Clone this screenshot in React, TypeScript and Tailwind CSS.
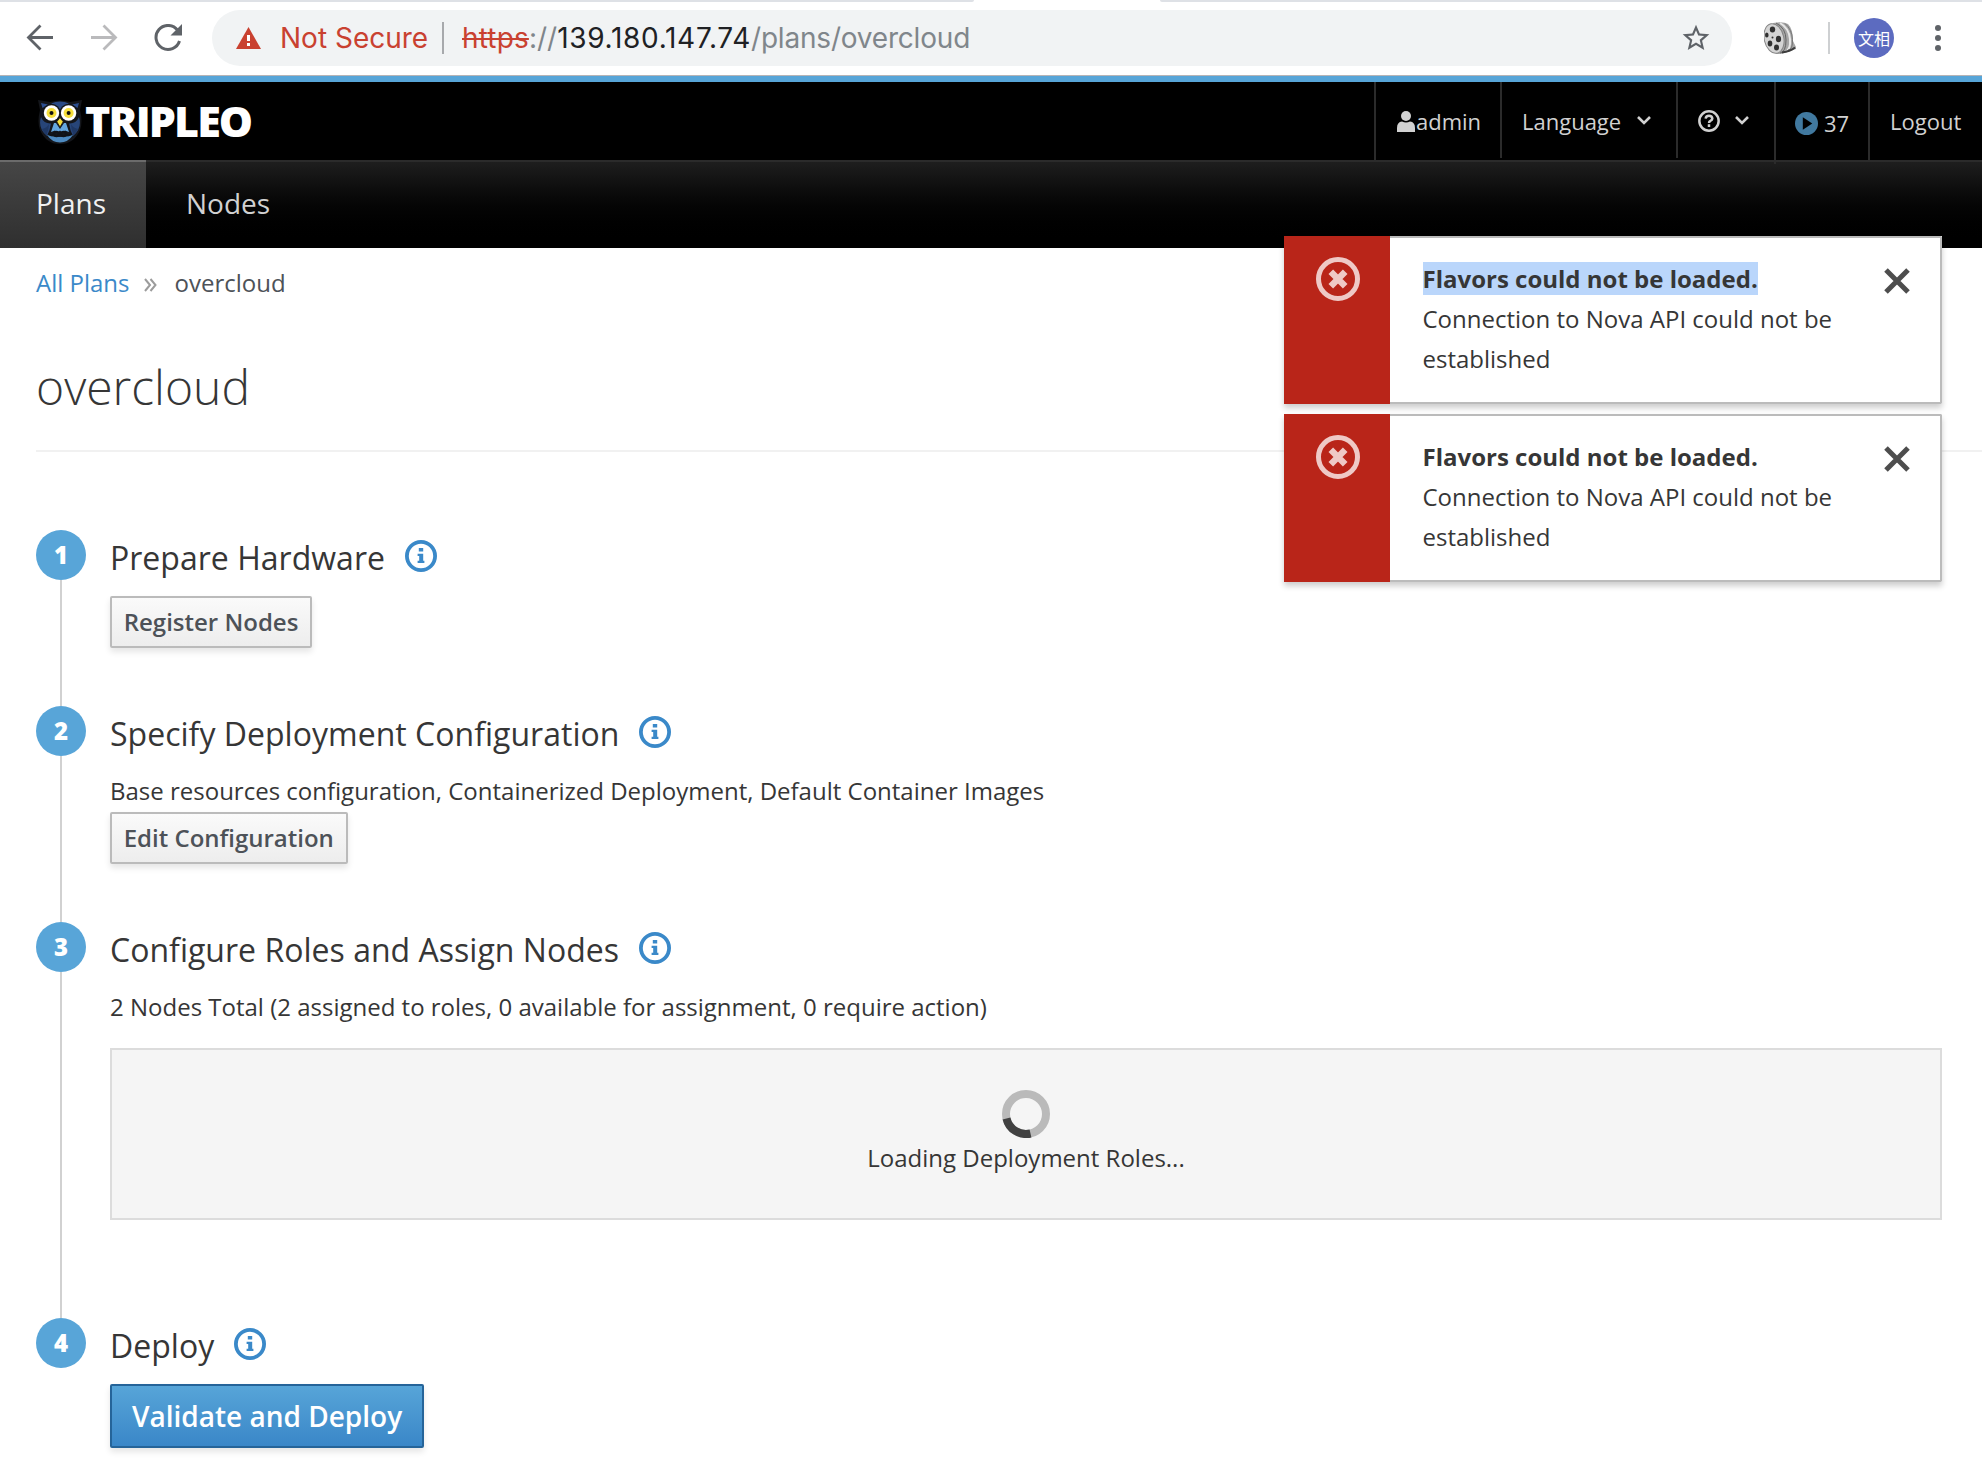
import React from "react";

const SANS = "font-['Open_Sans','Noto_Sans',sans-serif]";

function InfoIcon() {
  return (
    <svg className="size-8" viewBox="0 0 32 32" fill="none">
      <circle cx="16" cy="16" r="14.1" stroke="#3a89c9" strokeWidth="3.8" />
      <path d="M13.800 8h4.400v3.600h-4.400zM12.600 13.800h5.600v7h1.200V23h-6.800v-2.200h1.600v-4.800h-1.600z" fill="#3a89c9" />
    </svg>
  );
}

function Owl() {
  return (
    <svg className="mt-[2px] h-[46px] w-[44px]" viewBox="0 0 44 46">
      <path d="M0 1l12 2q10-3 20 0l12-2-2 10q3 12 0 20-6 14-20 14T2 31q-3-8 0-20z" fill="#14161b" />
      <path d="M3 4l7 1.500L4.500 9zM41 4l-7 1.500L39.500 9z" fill="#2d4f90" />
      <path d="M13 4.500q9-4 18 0-6 2-9 6.500-3-4.500-9-6.500z" fill="#2a4a86" />
      <path d="M3 18q3 7 10 6.500-1 7-4 12.500Q-.5 29 3 18zM41 18q-3 7-10 6.500 1 7 4 12.500 9.500-8 6-19z" fill="#274579" />
      <path d="M4 30q5-1 7-5 0 5-2.500 11Q5 33 4 30zM40 30q-5-1-7-5 0 5 2.500 11Q39 33 40 30z" fill="#1f3864" />
      <path d="M16 24h2l4 6 4-6h2l3 9-4-1.500-2.500 2L22 31.500l-2.500 2-2.500-2L13 33z" fill="#63a6df" />
      <path d="M9 36q6 2 13 2t13-2q-5 7.500-13 7.500T9 36z" fill="#4d8ac0" />
      <g fill="none" stroke="#101216" strokeWidth="2">
        <circle cx="18.500" cy="35" r="2.300" />
        <circle cx="25.500" cy="35" r="2.300" />
        <path d="M11 34q2 4 5 1M33 34q-2 4-5 1" />
      </g>
      <circle cx="13.500" cy="14" r="9.200" fill="#14161b" />
      <circle cx="30.600" cy="14" r="9.200" fill="#14161b" />
      <circle cx="13.500" cy="14" r="7.700" fill="#fff" />
      <circle cx="30.600" cy="14" r="7.700" fill="#fff" />
      <circle cx="13.500" cy="14" r="5" fill="#f6df3c" />
      <circle cx="30.600" cy="14" r="5" fill="#f6df3c" />
      <circle cx="13.500" cy="14" r="2" fill="#111" />
      <circle cx="30.600" cy="14" r="2" fill="#111" />
      <path d="M22 18.500l3.200 4.200L22 28l-3.200-5.300z" fill="#f6df3c" stroke="#14161b" strokeWidth=".8" />
    </svg>
  );
}

function FilmReel() {
  return (
    <svg className="size-8" viewBox="0 0 32 32">
      <path d="M9 1q10-2 15 1 5 5 5 17l3 6v2l-15 5h-5z" fill="#a6a6a6" />
      <path d="M16 1q9 5 10 16t-5 13" fill="none" stroke="#e8e8e8" strokeWidth="2" />
      <path d="M21 1.500q7 6 7.500 16T24 28" fill="none" stroke="#777" strokeWidth="1" />
      <path d="M12 1q10 5 10 17t-6 13" fill="none" stroke="#666" strokeWidth="1" />
      <ellipse cx="10" cy="16.500" rx="9.800" ry="15" transform="rotate(-12 10 16.500)" fill="#d4d4d4" stroke="#858585" />
      <g fill="#303030">
        <ellipse cx="8.500" cy="7.500" rx="2.700" ry="3" />
        <ellipse cx="2.800" cy="13" rx="1.800" ry="2.600" />
        <ellipse cx="14.500" cy="17" rx="2.600" ry="3.200" />
        <ellipse cx="6" cy="21.500" rx="2.300" ry="2.900" />
        <ellipse cx="12.500" cy="25.500" rx="2.500" ry="3" />
        <circle cx="8.500" cy="15.500" r="1" />
      </g>
      <path d="M18 30.500q8-1 13-5" fill="none" stroke="#3c3c3c" strokeWidth="2" />
    </svg>
  );
}

function Browser() {
  return (
    <div className="h-[76px] border-b border-[#b6b4b6] bg-white">
      <div className="flex h-[2px] justify-between">
        <div className="w-[974px] rounded-br bg-[#dee1e6]" />
        <div className="w-[822px] rounded-bl bg-[#dee1e6]" />
      </div>
      <div className="flex h-[72px] items-center font-[Inter,sans-serif] text-[28px]">
        <svg className="ml-[26px] h-7 w-7" viewBox="0 0 28 28" fill="none" stroke="#5f6368" strokeWidth="2.800">
          <path d="M27 13.500H3M14.500 1.500L2.500 13.500l12 12" />
        </svg>
        <svg className="ml-[36px] h-7 w-7" viewBox="0 0 28 28" fill="none" stroke="#bababc" strokeWidth="2.800">
          <path d="M1 13.500h24M13.500 1.500l12 12-12 12" />
        </svg>
        <svg className="ml-[36px] h-7 w-7" viewBox="0 0 28 28">
          <path d="M23.600 6.200A12 12 0 1 0 25.500 17" fill="none" stroke="#5f6368" strokeWidth="3" />
          <path d="M28 0v11.500H16.500z" fill="#5f6368" />
        </svg>
        <div className="ml-[30px] flex h-14 w-[1520px] items-center rounded-full bg-[#f1f3f4]">
          <svg className="ml-6 h-[22px] w-[25px]" viewBox="0 0 25 22">
            <path d="M12.500 0L25 22H0z" fill="#c94130" />
            <path d="M11 8h3v6h-3zM11 16h3v3h-3z" fill="#fff" />
          </svg>
          <span className="ml-[19px] w-[146px] whitespace-nowrap text-[#c94130]">Not Secure</span>
          <div className="ml-[16px] h-8 w-[2px] bg-[#a7a9ac]" />
          <div className="ml-[18px] whitespace-nowrap text-[#80868b]">
            <span className="tracking-[0.15px] text-[#c94130] line-through decoration-2">https</span>://
            <span className="tracking-[0.7px] text-[#202124]">139.180.147.74</span>
            <span className="tracking-[-0.200px]">/plans/overcloud</span>
          </div>
          <svg className="mr-[20px] ml-auto h-8 w-8" viewBox="0 0 24 24" fill="#5f6368">
            <path d="M22 9.240l-7.190-.62L12 2 9.190 8.630 2 9.240l5.460 4.730L5.820 21 12 17.270 18.180 21l-1.630-7.030L22 9.240zM12 15.400l-3.760 2.270 1-4.280-3.320-2.880 4.380-.38L12 6.100l1.710 4.040 4.380.38-3.320 2.880 1 4.280L12 15.400z" />
          </svg>
        </div>
        <div className="ml-8"><FilmReel /></div>
        <div className="ml-8 h-8 w-[2px] bg-[#ced0d2]" />
        <div className="ml-6 flex size-10 items-center justify-center rounded-full bg-[#5c6bc0] font-['Noto_Sans_CJK_SC',sans-serif] text-[16px] text-white">文相</div>
        <div className="ml-[41px] flex flex-col gap-1">
          <i className="size-[6px] rounded-full bg-[#5f6368]" />
          <i className="size-[6px] rounded-full bg-[#5f6368]" />
          <i className="size-[6px] rounded-full bg-[#5f6368]" />
        </div>
      </div>
    </div>
  );
}

function Chevron() {
  return (
    <svg className="h-[9px] w-[14px]" viewBox="0 0 14 9" fill="none" stroke="#d1d1d1" strokeWidth="2.600">
      <path d="M1 1l6 6 6-6" />
    </svg>
  );
}

function Header() {
  return (
    <header className="border-t-[6px] border-[#57a5d8] bg-black text-[#d1d1d1]">
      <div className="flex h-[78px] justify-between">
        <div className="flex items-center pl-[38px]">
          <Owl />
          <span className="ml-[3px] font-['Open_Sans',sans-serif] text-[43px] font-extrabold tracking-[-1.900px] text-white">TRIPLEO</span>
        </div>
        <div className="flex items-start text-[22px]">
          <div className="flex h-[78px] w-[126px] items-center border-l-2 border-[#2b2b2b] pt-px pl-[21px]">
            <svg className="mr-[1px] h-[21px] w-[18px]" viewBox="0 0 18 21" fill="#d1d1d1">
              <circle cx="9" cy="5" r="5" />
              <path d="M0 21v-4q0-6 5-6.500 4 2 8 0 5 .5 5 6.500v4z" />
            </svg>
            admin
          </div>
          <div className="flex h-[76px] w-[176px] items-center border-l-2 border-[#2b2b2b] pl-5">
            <span className="w-[115px] pt-[3px]">Language</span><Chevron />
          </div>
          <div className="flex h-[76px] w-[98px] items-center border-l-2 border-[#2b2b2b] pl-5">
            <svg className="mt-px mr-[15px] size-[22px]" viewBox="0 0 23 23" fill="none" stroke="#d1d1d1" strokeWidth="2.600">
              <circle cx="11.500" cy="11.500" r="10.100" />
              <path d="M8 9q.3-3 3.500-3T15 9q0 1.500-2 2.300-1.500.7-1.500 2.200M11.500 15v2.700" />
            </svg>
            <Chevron />
          </div>
          <div className="flex h-[82px] w-[94px] items-center border-l-2 border-[#2b2b2b] pl-[19px]">
            <svg className="mr-[6px] size-[23px]" viewBox="0 0 22 22">
              <circle cx="11" cy="11" r="11" fill="#41799f" />
              <path d="M7.500 5l9 6-9 6z" fill="#000" />
            </svg>
            <span className="pt-px">37</span>
          </div>
          <div className="flex h-[78px] w-[114px] items-center border-l-2 border-[#2b2b2b] pt-px pl-5">Logout</div>
        </div>
      </div>
      <nav className="flex h-[88px] border-t-2 border-[#2b2b2b] bg-linear-to-b from-[#1e1e1e] to-black text-[28px] leading-[83px]">
        <div className="-mt-[2px] w-[146px] border-t-2 border-[#6b6b6b] bg-linear-to-b from-[#464646] to-[#2f2f2f] pl-9 text-[#f1f1f1]">Plans</div>
        <div className="pl-10">Nodes</div>
      </nav>
    </header>
  );
}

function Toast({ selected }: { selected?: boolean }) {
  return (
    <div className="flex h-[168px] w-[658px] bg-white shadow-[0_4px_6px_rgba(0,0,0,0.2)]">
      <div className="flex w-[106px] justify-center bg-[#b92519] pt-[21px] pl-px">
        <svg className="size-11" viewBox="0 0 44 44" fill="none" stroke="#efc9c6">
          <circle cx="22" cy="22" r="19.500" strokeWidth="5" />
          <path d="M14.800 14.800l14.400 14.400M29.200 14.800L14.800 29.200" strokeWidth="6.500" />
        </svg>
      </div>
      <div className="flex flex-1 justify-between rounded-r-[2px] border-2 border-l-0 border-[#bbb] pt-[21px] pr-[30px] pl-[32.500px]">
        <div className="w-[420px] text-[24px] leading-[40px]">
          <b className={selected ? "bg-[#bad6fb]" : ""}>Flavors could not be loaded.</b>
          <br />
          Connection to Nova API could not be established
        </div>
        <svg className="mt-[9px] size-[26px]" viewBox="0 0 26 26" stroke="#4d4d4d" strokeWidth="5">
          <path d="M2 2l22 22M24 2L2 24" />
        </svg>
      </div>
    </div>
  );
}

function Step({ n, title, className, last, children }: { n: number; title: string; className: string; last?: boolean; children: React.ReactNode }) {
  return (
    <section className={"flex " + className}>
      <div className="flex w-[50px] flex-col items-center">
        <div className="flex size-[50px] shrink-0 items-center justify-center rounded-full bg-[#58a5d8] text-[24px] font-extrabold text-white">{n}</div>
        {!last && <div className="w-[2px] flex-1 bg-[#d1d1d1]" />}
      </div>
      <div className="ml-6 flex-1">
        <div className="flex h-[66px] pt-[10px]">
          <h2 className="mr-5 text-[32px] leading-9 tracking-[0.02px]">{title}</h2>
          <InfoIcon />
        </div>
        {children}
      </div>
    </section>
  );
}

function Button({ children }: { children: React.ReactNode }) {
  return (
    <button className="block h-[52px] rounded-[2px] border-2 border-[#bbb] bg-linear-to-b from-[#fafafa] to-[#ededed] px-[11.700px] text-[24px] leading-[46px] font-semibold text-[#4d5258] shadow-[0_4px_6px_rgba(3,3,3,0.1)]">
      {children}
    </button>
  );
}

export default function App() {
  return (
    <div className={"relative h-[1472px] w-[1982px] overflow-hidden bg-white text-[24px] text-[#363636] " + SANS}>
      <Browser />
      <Header />
      <main className="pl-9">
        <div className="flex h-14 items-center pt-[14px] leading-10">
          <span className="text-[#3a89c9]">All Plans</span>
          <svg className="mx-[14px] mt-1 h-[14px] w-[13px]" viewBox="0 0 13 14" fill="none" stroke="#9c9c9c" strokeWidth="2">
            <path d="M1 1l5 6-5 6M6.500 1l5 6-5 6" />
          </svg>
          <span className="ml-[4px] text-[#4d5258]">overcloud</span>
        </div>
        <h1 className="mt-[50px] h-[98px] border-b-2 border-[#f1f1f1] text-[48px] leading-[66px] font-light">overcloud</h1>
        <div className="pt-[78px] pr-10">
          <Step n={1} title="Prepare Hardware" className="h-[176px]">
            <Button>Register Nodes</Button>
          </Step>
          <Step n={2} title="Specify Deployment Configuration" className="h-[216px]">
            <p className="h-10 leading-[38px]">Base resources configuration, Containerized Deployment, Default Container Images</p>
            <Button>Edit Configuration</Button>
          </Step>
          <Step n={3} title="Configure Roles and Assign Nodes" className="h-[396px]">
            <p className="h-10 leading-[38px]">2 Nodes Total (2 assigned to roles, 0 available for assignment, 0 require action)</p>
            <div className="mt-5 flex h-[172px] flex-col items-center border-2 border-[#dcdcdc] bg-[#f5f5f5] pt-10">
              <svg className="size-12" viewBox="0 0 48 48" fill="none" strokeWidth="8">
                <circle cx="24" cy="24" r="20" stroke="#bababa" />
                <path d="M4.500 28.500A20 20 0 0 0 28.500 43.500" stroke="#414141" />
              </svg>
              <div className="leading-10">Loading Deployment Roles...</div>
            </div>
          </Step>
          <Step n={4} title="Deploy" className="" last>
            <button className="block h-16 rounded-[2px] border-2 border-[#256499] bg-linear-to-b from-[#57a5d8] to-[#3a87c8] px-5 text-[28px] leading-[58px] font-semibold text-white shadow-[0_4px_6px_rgba(3,3,3,0.1)]">
              Validate and Deploy
            </button>
          </Step>
        </div>
      </main>
      <div className="absolute top-[236px] right-10 flex flex-col gap-[10px]">
        <Toast selected />
        <Toast />
      </div>
    </div>
  );
}
